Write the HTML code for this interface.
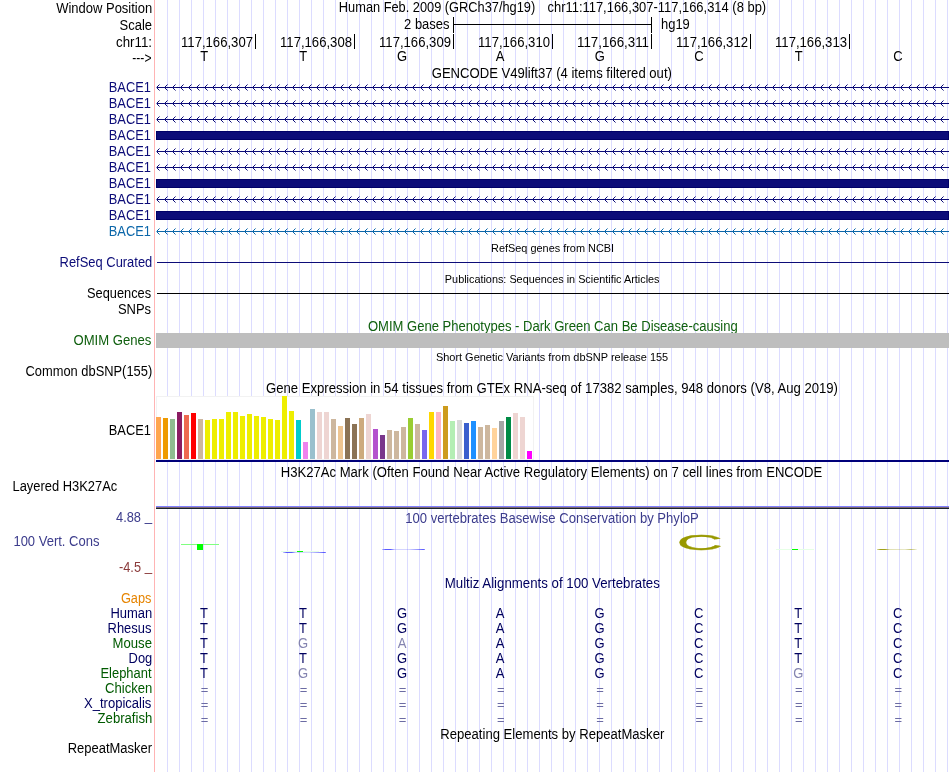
<!DOCTYPE html>
<html lang="en"><head><meta charset="utf-8"><title>UCSC Genome Browser - chr11:117,166,307-117,166,314</title>
<style>html,body{margin:0;padding:0;background:#fff}svg{display:block;will-change:transform}text{font-family:"Liberation Sans",sans-serif;font-size:14px}</style></head><body>
<svg width="950" height="772" viewBox="0 0 950 772">
<rect x="0" y="0" width="950" height="772" fill="#fff"/>
<g shape-rendering="crispEdges">
<path d="M167.5 0V772M179.5 0V772M191.5 0V772M203.5 0V772M215.5 0V772M227.5 0V772M239.5 0V772M251.5 0V772M263.5 0V772M275.5 0V772M287.5 0V772M299.5 0V772M311.5 0V772M323.5 0V772M335.5 0V772M347.5 0V772M359.5 0V772M371.5 0V772M383.5 0V772M395.5 0V772M407.5 0V772M419.5 0V772M431.5 0V772M443.5 0V772M455.5 0V772M467.5 0V772M479.5 0V772M491.5 0V772M503.5 0V772M515.5 0V772M527.5 0V772M539.5 0V772M551.5 0V772M563.5 0V772M575.5 0V772M587.5 0V772M599.5 0V772M611.5 0V772M623.5 0V772M635.5 0V772M647.5 0V772M659.5 0V772M671.5 0V772M683.5 0V772M695.5 0V772M707.5 0V772M719.5 0V772M731.5 0V772M743.5 0V772M755.5 0V772M767.5 0V772M779.5 0V772M791.5 0V772M803.5 0V772M815.5 0V772M827.5 0V772M839.5 0V772M851.5 0V772M863.5 0V772M875.5 0V772M887.5 0V772M899.5 0V772M911.5 0V772M923.5 0V772M935.5 0V772M947.5 0V772" stroke="#dcdcff" stroke-width="1" fill="none"/>
<path d="M154.5 0V772" stroke="#ffb4b4" stroke-width="1" fill="none"/>
</g>
<text x="152.2" y="12.6" text-anchor="end" textLength="96.0" lengthAdjust="spacingAndGlyphs">Window Position</text>
<text x="152" y="29.5" text-anchor="end" textLength="32.5" lengthAdjust="spacingAndGlyphs">Scale</text>
<text x="152" y="47" text-anchor="end" textLength="35.98" lengthAdjust="spacingAndGlyphs">chr11:</text>
<text x="132.33" y="63" textLength="19.13" lengthAdjust="spacingAndGlyphs">---&gt;</text>
<text x="338.86" y="12.3" textLength="196.33" lengthAdjust="spacingAndGlyphs">Human Feb. 2009 (GRCh37/hg19)</text>
<text x="547.51" y="12.3" textLength="218.64" lengthAdjust="spacingAndGlyphs">chr11:117,166,307-117,166,314 (8 bp)</text>
<text x="449.5" y="29.3" text-anchor="end" textLength="45.4" lengthAdjust="spacingAndGlyphs">2 bases</text>
<text x="661" y="29" textLength="28.8" lengthAdjust="spacingAndGlyphs">hg19</text>
<g shape-rendering="crispEdges" stroke="#000" fill="none">
<path d="M453.5 17V33M651.5 17V33M453 24.5H652"/>
<path d="M255.5 34V49M354.5 34V49M453.5 34V49M552.5 34V49M651.5 34V49M750.5 34V49M849.5 34V49"/>
</g>
<text x="253" y="47" text-anchor="end" textLength="71.98" lengthAdjust="spacingAndGlyphs">117,166,307</text>
<text x="352" y="47" text-anchor="end" textLength="71.98" lengthAdjust="spacingAndGlyphs">117,166,308</text>
<text x="451" y="47" text-anchor="end" textLength="71.98" lengthAdjust="spacingAndGlyphs">117,166,309</text>
<text x="550" y="47" text-anchor="end" textLength="71.98" lengthAdjust="spacingAndGlyphs">117,166,310</text>
<text x="649" y="47" text-anchor="end" textLength="71.97" lengthAdjust="spacingAndGlyphs">117,166,311</text>
<text x="748" y="47" text-anchor="end" textLength="71.98" lengthAdjust="spacingAndGlyphs">117,166,312</text>
<text x="847" y="47" text-anchor="end" textLength="71.98" lengthAdjust="spacingAndGlyphs">117,166,313</text>
<text x="204.2" y="60.7" text-anchor="middle" textLength="7.9" lengthAdjust="spacingAndGlyphs">T</text>
<text x="303.2" y="60.7" text-anchor="middle" textLength="7.9" lengthAdjust="spacingAndGlyphs">T</text>
<text x="402" y="60.7" text-anchor="middle" textLength="10.1" lengthAdjust="spacingAndGlyphs">G</text>
<text x="500.2" y="60.7" text-anchor="middle" textLength="8.7" lengthAdjust="spacingAndGlyphs">A</text>
<text x="599.8" y="60.7" text-anchor="middle" textLength="10.1" lengthAdjust="spacingAndGlyphs">G</text>
<text x="699" y="60.7" text-anchor="middle" textLength="9.4" lengthAdjust="spacingAndGlyphs">C</text>
<text x="798.6" y="60.7" text-anchor="middle" textLength="7.9" lengthAdjust="spacingAndGlyphs">T</text>
<text x="898.0" y="60.7" text-anchor="middle" textLength="9.4" lengthAdjust="spacingAndGlyphs">C</text>
<text x="431.69" y="77.8" textLength="240.21" lengthAdjust="spacingAndGlyphs">GENCODE V49lift37 (4 items filtered out)</text>
<defs>
<pattern id="cv" x="156" y="79" width="8" height="16" patternUnits="userSpaceOnUse"><g shape-rendering="crispEdges" fill="#0c0c78"><path d="M0 8h8v1h-8zM1 7h1v1h-1zM1 9h1v1h-1zM2 6h1v1h-1zM2 10h1v1h-1z"/><path d="M3 5h1v1h-1zM3 11h1v1h-1z" fill-opacity="0.55"/></g></pattern>
<pattern id="cl" x="156" y="79" width="8" height="16" patternUnits="userSpaceOnUse"><g shape-rendering="crispEdges" fill="#0b66a9"><path d="M0 8h8v1h-8zM1 7h1v1h-1zM1 9h1v1h-1zM2 6h1v1h-1zM2 10h1v1h-1z"/><path d="M3 5h1v1h-1zM3 11h1v1h-1z" fill-opacity="0.55"/></g></pattern>
</defs>
<text x="108.81" y="91.5" fill="#0c0c78" textLength="42.08" lengthAdjust="spacingAndGlyphs">BACE1</text>
<rect x="156" y="84" width="792" height="7" fill="url(#cv)" shape-rendering="crispEdges"/>
<rect x="156" y="87" width="1" height="1" fill="#fff" fill-opacity="0.5" shape-rendering="crispEdges"/>
<rect x="948" y="87" width="1" height="1" fill="#0c0c78" shape-rendering="crispEdges"/>
<text x="108.81" y="107.5" fill="#0c0c78" textLength="42.08" lengthAdjust="spacingAndGlyphs">BACE1</text>
<rect x="156" y="100" width="792" height="7" fill="url(#cv)" shape-rendering="crispEdges"/>
<rect x="156" y="103" width="1" height="1" fill="#fff" fill-opacity="0.5" shape-rendering="crispEdges"/>
<rect x="948" y="103" width="1" height="1" fill="#0c0c78" shape-rendering="crispEdges"/>
<text x="108.81" y="123.5" fill="#0c0c78" textLength="42.08" lengthAdjust="spacingAndGlyphs">BACE1</text>
<rect x="156" y="116" width="792" height="7" fill="url(#cv)" shape-rendering="crispEdges"/>
<rect x="156" y="119" width="1" height="1" fill="#fff" fill-opacity="0.5" shape-rendering="crispEdges"/>
<rect x="948" y="119" width="1" height="1" fill="#0c0c78" shape-rendering="crispEdges"/>
<text x="108.81" y="139.5" fill="#0c0c78" textLength="42.08" lengthAdjust="spacingAndGlyphs">BACE1</text>
<rect x="156" y="131" width="793" height="9" fill="#000066" shape-rendering="crispEdges"/>
<rect x="157" y="132" width="791" height="7" fill="#0c0c78" shape-rendering="crispEdges"/>
<text x="108.81" y="155.5" fill="#0c0c78" textLength="42.08" lengthAdjust="spacingAndGlyphs">BACE1</text>
<rect x="156" y="148" width="792" height="7" fill="url(#cv)" shape-rendering="crispEdges"/>
<rect x="156" y="151" width="1" height="1" fill="#fff" fill-opacity="0.5" shape-rendering="crispEdges"/>
<rect x="948" y="151" width="1" height="1" fill="#0c0c78" shape-rendering="crispEdges"/>
<text x="108.81" y="171.5" fill="#0c0c78" textLength="42.08" lengthAdjust="spacingAndGlyphs">BACE1</text>
<rect x="156" y="164" width="792" height="7" fill="url(#cv)" shape-rendering="crispEdges"/>
<rect x="156" y="167" width="1" height="1" fill="#fff" fill-opacity="0.5" shape-rendering="crispEdges"/>
<rect x="948" y="167" width="1" height="1" fill="#0c0c78" shape-rendering="crispEdges"/>
<text x="108.81" y="187.5" fill="#0c0c78" textLength="42.08" lengthAdjust="spacingAndGlyphs">BACE1</text>
<rect x="156" y="179" width="793" height="9" fill="#000066" shape-rendering="crispEdges"/>
<rect x="157" y="180" width="791" height="7" fill="#0c0c78" shape-rendering="crispEdges"/>
<text x="108.81" y="203.5" fill="#0c0c78" textLength="42.08" lengthAdjust="spacingAndGlyphs">BACE1</text>
<rect x="156" y="196" width="792" height="7" fill="url(#cv)" shape-rendering="crispEdges"/>
<rect x="156" y="199" width="1" height="1" fill="#fff" fill-opacity="0.5" shape-rendering="crispEdges"/>
<rect x="948" y="199" width="1" height="1" fill="#0c0c78" shape-rendering="crispEdges"/>
<text x="108.81" y="219.5" fill="#0c0c78" textLength="42.08" lengthAdjust="spacingAndGlyphs">BACE1</text>
<rect x="156" y="211" width="793" height="9" fill="#000066" shape-rendering="crispEdges"/>
<rect x="157" y="212" width="791" height="7" fill="#0c0c78" shape-rendering="crispEdges"/>
<text x="108.81" y="235.5" fill="#0b66a9" textLength="42.08" lengthAdjust="spacingAndGlyphs">BACE1</text>
<rect x="156" y="228" width="792" height="7" fill="url(#cl)" shape-rendering="crispEdges"/>
<rect x="156" y="231" width="1" height="1" fill="#fff" fill-opacity="0.5" shape-rendering="crispEdges"/>
<rect x="948" y="231" width="1" height="1" fill="#0b66a9" shape-rendering="crispEdges"/>
<text x="491.06" y="252.0" style="font-size:11px" textLength="123.07" lengthAdjust="spacingAndGlyphs">RefSeq genes from NCBI</text>
<text x="59.6" y="266.6" fill="#0c0c78" textLength="92.69" lengthAdjust="spacingAndGlyphs">RefSeq Curated</text>
<rect x="157" y="262" width="792" height="1" fill="#0c0c78" shape-rendering="crispEdges"/>
<text x="444.87" y="283.0" style="font-size:11px" textLength="214.66" lengthAdjust="spacingAndGlyphs">Publications: Sequences in Scientific Articles</text>
<text x="87.01" y="298" textLength="64.09" lengthAdjust="spacingAndGlyphs">Sequences</text>
<rect x="157" y="293" width="792" height="1" fill="#000" shape-rendering="crispEdges"/>
<text x="117.9" y="314" textLength="33.2" lengthAdjust="spacingAndGlyphs">SNPs</text>
<text x="367.9" y="330.6" fill="#10600f" textLength="369.81" lengthAdjust="spacingAndGlyphs">OMIM Gene Phenotypes - Dark Green Can Be Disease-causing</text>
<text x="73.49" y="345" fill="#10600f" textLength="77.91" lengthAdjust="spacingAndGlyphs">OMIM Genes</text>
<rect x="156" y="333" width="793" height="15" fill="#bebebe" shape-rendering="crispEdges"/>
<text x="435.88" y="361" style="font-size:11px" textLength="232.33" lengthAdjust="spacingAndGlyphs">Short Genetic Variants from dbSNP release 155</text>
<text x="25.5" y="376" textLength="126.69" lengthAdjust="spacingAndGlyphs">Common dbSNP(155)</text>
<text x="265.99" y="392.7" textLength="572.0" lengthAdjust="spacingAndGlyphs">Gene Expression in 54 tissues from GTEx RNA-seq of 17382 samples, 948 donors (V8, Aug 2019)</text>
<text x="108.81" y="434.8" textLength="42.08" lengthAdjust="spacingAndGlyphs">BACE1</text>
<rect x="156" y="396" width="378" height="64" fill="#fff" shape-rendering="crispEdges"/>
<path d="M156.5 460V396.5H533.5V460M156 459.5H534" stroke="#f2f2f2" fill="none" shape-rendering="crispEdges"/>
<g shape-rendering="crispEdges">
<rect x="156" y="417" width="5" height="42" fill="#ffa54f"/>
<rect x="163" y="418" width="5" height="41" fill="#ee9a00"/>
<rect x="170" y="419" width="5" height="40" fill="#8fbc8f"/>
<rect x="177" y="412" width="5" height="47" fill="#8b1c62"/>
<rect x="184" y="415" width="5" height="44" fill="#ee6a50"/>
<rect x="191" y="413" width="5" height="46" fill="#ff0000"/>
<rect x="198" y="419" width="5" height="40" fill="#cdb79e"/>
<rect x="205" y="420" width="5" height="39" fill="#eeee00"/>
<rect x="212" y="419" width="5" height="40" fill="#eeee00"/>
<rect x="219" y="419" width="5" height="40" fill="#eeee00"/>
<rect x="226" y="412" width="5" height="47" fill="#eeee00"/>
<rect x="233" y="412" width="5" height="47" fill="#eeee00"/>
<rect x="240" y="416" width="5" height="43" fill="#eeee00"/>
<rect x="247" y="414" width="5" height="45" fill="#eeee00"/>
<rect x="254" y="416" width="5" height="43" fill="#eeee00"/>
<rect x="261" y="417" width="5" height="42" fill="#eeee00"/>
<rect x="268" y="419" width="5" height="40" fill="#eeee00"/>
<rect x="275" y="420" width="5" height="39" fill="#eeee00"/>
<rect x="282" y="396" width="5" height="63" fill="#eeee00"/>
<rect x="289" y="411" width="5" height="48" fill="#eeee00"/>
<rect x="296" y="420" width="5" height="39" fill="#00cdcd"/>
<rect x="303" y="442" width="5" height="17" fill="#ee82ee"/>
<rect x="310" y="409" width="5" height="50" fill="#9ac0cd"/>
<rect x="317" y="412" width="5" height="47" fill="#eed5d2"/>
<rect x="324" y="412" width="5" height="47" fill="#eed5d2"/>
<rect x="331" y="419" width="5" height="40" fill="#cdb79e"/>
<rect x="338" y="426" width="5" height="33" fill="#eec591"/>
<rect x="345" y="418" width="5" height="41" fill="#8b7355"/>
<rect x="352" y="424" width="5" height="35" fill="#8b7355"/>
<rect x="359" y="418" width="5" height="41" fill="#cdaa7d"/>
<rect x="366" y="414" width="5" height="45" fill="#eed5d2"/>
<rect x="373" y="429" width="5" height="30" fill="#b452cd"/>
<rect x="380" y="435" width="5" height="24" fill="#7a378b"/>
<rect x="387" y="430" width="5" height="29" fill="#cdb79e"/>
<rect x="394" y="431" width="5" height="28" fill="#cdb79e"/>
<rect x="401" y="427" width="5" height="32" fill="#cdb79e"/>
<rect x="408" y="418" width="5" height="41" fill="#9acd32"/>
<rect x="415" y="424" width="5" height="35" fill="#cdb79e"/>
<rect x="422" y="430" width="5" height="29" fill="#7a67ee"/>
<rect x="429" y="412" width="5" height="47" fill="#ffd700"/>
<rect x="436" y="412" width="5" height="47" fill="#ffb6c1"/>
<rect x="443" y="406" width="5" height="53" fill="#cd9b1d"/>
<rect x="450" y="421" width="5" height="38" fill="#b4eeb4"/>
<rect x="457" y="420" width="5" height="39" fill="#d9d9d9"/>
<rect x="464" y="423" width="5" height="36" fill="#3a5fcd"/>
<rect x="471" y="421" width="5" height="38" fill="#1e90ff"/>
<rect x="478" y="427" width="5" height="32" fill="#cdb79e"/>
<rect x="485" y="425" width="5" height="34" fill="#cdb79e"/>
<rect x="492" y="428" width="5" height="31" fill="#ffd39b"/>
<rect x="499" y="421" width="5" height="38" fill="#a6a6a6"/>
<rect x="506" y="417" width="5" height="42" fill="#008b45"/>
<rect x="513" y="413" width="5" height="46" fill="#eed5d2"/>
<rect x="520" y="417" width="5" height="42" fill="#eed5d2"/>
<rect x="527" y="451" width="5" height="8" fill="#ff00ff"/>
<rect x="156" y="460" width="793" height="2" fill="#00007a"/>
</g>
<text x="280.69" y="476.5" textLength="541.5" lengthAdjust="spacingAndGlyphs">H3K27Ac Mark (Often Found Near Active Regulatory Elements) on 7 cell lines from ENCODE</text>
<text x="12.5" y="491.1" textLength="104.79" lengthAdjust="spacingAndGlyphs">Layered H3K27Ac</text>
<g shape-rendering="crispEdges">
<rect x="156" y="506" width="793" height="1" fill="#8080ff"/>
<rect x="156" y="507" width="793" height="1" fill="#806874"/>
<rect x="156" y="508" width="793" height="1" fill="#18242e"/>
</g>
<text x="116.0" y="521.6" fill="#3c3c8c" textLength="24.99" lengthAdjust="spacingAndGlyphs">4.88</text>
<text x="144.81" y="521.2" fill="#3c3c8c" textLength="7.39" lengthAdjust="spacingAndGlyphs">_</text>
<text x="405.19" y="522.5" fill="#3c3c8c" textLength="293.61" lengthAdjust="spacingAndGlyphs">100 vertebrates Basewise Conservation by PhyloP</text>
<text x="13.41" y="546.3" fill="#3c3c8c" textLength="85.98" lengthAdjust="spacingAndGlyphs">100 Vert. Cons</text>
<text x="119.01" y="571.6" fill="#8c3c3c" textLength="21.99" lengthAdjust="spacingAndGlyphs">-4.5</text>
<text x="144.81" y="571.2" fill="#8c3c3c" textLength="7.39" lengthAdjust="spacingAndGlyphs">_</text>
<g shape-rendering="crispEdges">
<rect x="181" y="544" width="38" height="1" fill="#80ff80"/>
<rect x="197" y="544" width="6" height="6" fill="#00ff00"/>
<rect x="281" y="551" width="38" height="1" fill="#e6ffe6"/>
<rect x="297" y="551" width="6" height="1" fill="#00ff00"/>
</g>
<linearGradient id="sq1" gradientUnits="userSpaceOnUse" x1="283" y1="0" x2="326" y2="0"><stop offset="0" stop-color="rgb(50,50,255)" stop-opacity="0.25"/><stop offset="0.08" stop-color="rgb(50,50,255)" stop-opacity="0.8"/><stop offset="0.2" stop-color="rgb(50,50,255)" stop-opacity="0.8"/><stop offset="0.3" stop-color="rgb(50,50,255)" stop-opacity="0.22"/><stop offset="0.62" stop-color="rgb(50,50,255)" stop-opacity="0.2"/><stop offset="0.85" stop-color="rgb(50,50,255)" stop-opacity="0.55"/><stop offset="0.96" stop-color="rgb(50,50,255)" stop-opacity="0.8"/><stop offset="1" stop-color="rgb(50,50,255)" stop-opacity="0.5"/></linearGradient>
<rect x="283" y="552" width="43" height="1" fill="url(#sq1)" shape-rendering="crispEdges"/>
<linearGradient id="sq2" gradientUnits="userSpaceOnUse" x1="382" y1="0" x2="425" y2="0"><stop offset="0" stop-color="rgb(50,50,255)" stop-opacity="0.25"/><stop offset="0.08" stop-color="rgb(50,50,255)" stop-opacity="0.8"/><stop offset="0.2" stop-color="rgb(50,50,255)" stop-opacity="0.8"/><stop offset="0.3" stop-color="rgb(50,50,255)" stop-opacity="0.22"/><stop offset="0.62" stop-color="rgb(50,50,255)" stop-opacity="0.2"/><stop offset="0.85" stop-color="rgb(50,50,255)" stop-opacity="0.55"/><stop offset="0.96" stop-color="rgb(50,50,255)" stop-opacity="0.8"/><stop offset="1" stop-color="rgb(50,50,255)" stop-opacity="0.5"/></linearGradient>
<rect x="382" y="549" width="43" height="1" fill="url(#sq2)" shape-rendering="crispEdges"/>
<text transform="translate(676.4,549.9) scale(2.95,1)" x="0" y="0" fill="#999900" stroke="#999900" stroke-width="0.6" vector-effect="non-scaling-stroke" style="font-size:21.8px">C</text>
<g shape-rendering="crispEdges">
<rect x="776" y="549" width="38" height="1" fill="#e6ffe6"/>
<rect x="792" y="549" width="6" height="1" fill="#00ff00"/>
</g>
<linearGradient id="sq3" gradientUnits="userSpaceOnUse" x1="877" y1="0" x2="917" y2="0"><stop offset="0" stop-color="rgb(150,150,0)" stop-opacity="0.3"/><stop offset="0.08" stop-color="rgb(150,150,0)" stop-opacity="0.9"/><stop offset="0.2" stop-color="rgb(150,150,0)" stop-opacity="0.9"/><stop offset="0.32" stop-color="rgb(150,150,0)" stop-opacity="0.3"/><stop offset="0.7" stop-color="rgb(150,150,0)" stop-opacity="0.22"/><stop offset="0.84" stop-color="rgb(150,150,0)" stop-opacity="0.55"/><stop offset="0.93" stop-color="rgb(150,150,0)" stop-opacity="0.35"/><stop offset="1" stop-color="rgb(150,150,0)" stop-opacity="0.08"/></linearGradient>
<rect x="877" y="549" width="40" height="1" fill="url(#sq3)" shape-rendering="crispEdges"/>
<text x="444.78" y="588.4" fill="#00005f" textLength="215.1" lengthAdjust="spacingAndGlyphs">Multiz Alignments of 100 Vertebrates</text>
<text x="120.91" y="602.7" fill="#e68400" textLength="30.48" lengthAdjust="spacingAndGlyphs">Gaps</text>
<text x="110.4" y="617.5" fill="#00005f" textLength="41.9" lengthAdjust="spacingAndGlyphs">Human</text>
<text x="204.0" y="617.5" text-anchor="middle" fill="#00005f" textLength="7.9" lengthAdjust="spacingAndGlyphs">T</text>
<text x="303.0" y="617.5" text-anchor="middle" fill="#00005f" textLength="7.9" lengthAdjust="spacingAndGlyphs">T</text>
<text x="402.0" y="617.5" text-anchor="middle" fill="#00005f" textLength="10.1" lengthAdjust="spacingAndGlyphs">G</text>
<text x="500.2" y="617.5" text-anchor="middle" fill="#00005f" textLength="8.7" lengthAdjust="spacingAndGlyphs">A</text>
<text x="599.6" y="617.5" text-anchor="middle" fill="#00005f" textLength="10.1" lengthAdjust="spacingAndGlyphs">G</text>
<text x="698.8" y="617.5" text-anchor="middle" fill="#00005f" textLength="9.4" lengthAdjust="spacingAndGlyphs">C</text>
<text x="798.3" y="617.5" text-anchor="middle" fill="#00005f" textLength="7.9" lengthAdjust="spacingAndGlyphs">T</text>
<text x="897.8" y="617.5" text-anchor="middle" fill="#00005f" textLength="9.4" lengthAdjust="spacingAndGlyphs">C</text>
<text x="107.6" y="632.5" fill="#00005f" textLength="43.79" lengthAdjust="spacingAndGlyphs">Rhesus</text>
<text x="204.0" y="632.5" text-anchor="middle" fill="#00005f" textLength="7.9" lengthAdjust="spacingAndGlyphs">T</text>
<text x="303.0" y="632.5" text-anchor="middle" fill="#00005f" textLength="7.9" lengthAdjust="spacingAndGlyphs">T</text>
<text x="402.0" y="632.5" text-anchor="middle" fill="#00005f" textLength="10.1" lengthAdjust="spacingAndGlyphs">G</text>
<text x="500.2" y="632.5" text-anchor="middle" fill="#00005f" textLength="8.7" lengthAdjust="spacingAndGlyphs">A</text>
<text x="599.6" y="632.5" text-anchor="middle" fill="#00005f" textLength="10.1" lengthAdjust="spacingAndGlyphs">G</text>
<text x="698.8" y="632.5" text-anchor="middle" fill="#00005f" textLength="9.4" lengthAdjust="spacingAndGlyphs">C</text>
<text x="798.3" y="632.5" text-anchor="middle" fill="#00005f" textLength="7.9" lengthAdjust="spacingAndGlyphs">T</text>
<text x="897.8" y="632.5" text-anchor="middle" fill="#00005f" textLength="9.4" lengthAdjust="spacingAndGlyphs">C</text>
<text x="112.59" y="647.5" fill="#005a00" textLength="39.42" lengthAdjust="spacingAndGlyphs">Mouse</text>
<text x="204.0" y="647.5" text-anchor="middle" fill="#00005f" textLength="7.9" lengthAdjust="spacingAndGlyphs">T</text>
<text x="303.0" y="647.5" text-anchor="middle" fill="#8484b0" textLength="10.1" lengthAdjust="spacingAndGlyphs">G</text>
<text x="402.0" y="647.5" text-anchor="middle" fill="#8484b0" textLength="8.7" lengthAdjust="spacingAndGlyphs">A</text>
<text x="500.2" y="647.5" text-anchor="middle" fill="#00005f" textLength="8.7" lengthAdjust="spacingAndGlyphs">A</text>
<text x="599.6" y="647.5" text-anchor="middle" fill="#00005f" textLength="10.1" lengthAdjust="spacingAndGlyphs">G</text>
<text x="698.8" y="647.5" text-anchor="middle" fill="#00005f" textLength="9.4" lengthAdjust="spacingAndGlyphs">C</text>
<text x="798.3" y="647.5" text-anchor="middle" fill="#00005f" textLength="7.9" lengthAdjust="spacingAndGlyphs">T</text>
<text x="897.8" y="647.5" text-anchor="middle" fill="#00005f" textLength="9.4" lengthAdjust="spacingAndGlyphs">C</text>
<text x="128.6" y="662.5" fill="#00005f" textLength="23.69" lengthAdjust="spacingAndGlyphs">Dog</text>
<text x="204.0" y="662.5" text-anchor="middle" fill="#00005f" textLength="7.9" lengthAdjust="spacingAndGlyphs">T</text>
<text x="303.0" y="662.5" text-anchor="middle" fill="#00005f" textLength="7.9" lengthAdjust="spacingAndGlyphs">T</text>
<text x="402.0" y="662.5" text-anchor="middle" fill="#00005f" textLength="10.1" lengthAdjust="spacingAndGlyphs">G</text>
<text x="500.2" y="662.5" text-anchor="middle" fill="#00005f" textLength="8.7" lengthAdjust="spacingAndGlyphs">A</text>
<text x="599.6" y="662.5" text-anchor="middle" fill="#00005f" textLength="10.1" lengthAdjust="spacingAndGlyphs">G</text>
<text x="698.8" y="662.5" text-anchor="middle" fill="#00005f" textLength="9.4" lengthAdjust="spacingAndGlyphs">C</text>
<text x="798.3" y="662.5" text-anchor="middle" fill="#00005f" textLength="7.9" lengthAdjust="spacingAndGlyphs">T</text>
<text x="897.8" y="662.5" text-anchor="middle" fill="#00005f" textLength="9.4" lengthAdjust="spacingAndGlyphs">C</text>
<text x="100.5" y="677.5" fill="#005a00" textLength="51.0" lengthAdjust="spacingAndGlyphs">Elephant</text>
<text x="204.0" y="677.5" text-anchor="middle" fill="#00005f" textLength="7.9" lengthAdjust="spacingAndGlyphs">T</text>
<text x="303.0" y="677.5" text-anchor="middle" fill="#8484b0" textLength="10.1" lengthAdjust="spacingAndGlyphs">G</text>
<text x="402.0" y="677.5" text-anchor="middle" fill="#00005f" textLength="10.1" lengthAdjust="spacingAndGlyphs">G</text>
<text x="500.2" y="677.5" text-anchor="middle" fill="#00005f" textLength="8.7" lengthAdjust="spacingAndGlyphs">A</text>
<text x="599.6" y="677.5" text-anchor="middle" fill="#00005f" textLength="10.1" lengthAdjust="spacingAndGlyphs">G</text>
<text x="698.8" y="677.5" text-anchor="middle" fill="#00005f" textLength="9.4" lengthAdjust="spacingAndGlyphs">C</text>
<text x="798.3" y="677.5" text-anchor="middle" fill="#8484b0" textLength="10.1" lengthAdjust="spacingAndGlyphs">G</text>
<text x="897.8" y="677.5" text-anchor="middle" fill="#00005f" textLength="9.4" lengthAdjust="spacingAndGlyphs">C</text>
<text x="104.99" y="692.5" fill="#005a00" textLength="47.31" lengthAdjust="spacingAndGlyphs">Chicken</text>
<text x="204.5" y="694" text-anchor="middle" fill="#6c6ca4" style="font-size:12.99px">=</text>
<text x="303.5" y="694" text-anchor="middle" fill="#6c6ca4" style="font-size:12.99px">=</text>
<text x="402.5" y="694" text-anchor="middle" fill="#6c6ca4" style="font-size:12.99px">=</text>
<text x="500.7" y="694" text-anchor="middle" fill="#6c6ca4" style="font-size:12.99px">=</text>
<text x="600.1" y="694" text-anchor="middle" fill="#6c6ca4" style="font-size:12.99px">=</text>
<text x="699.3" y="694" text-anchor="middle" fill="#6c6ca4" style="font-size:12.99px">=</text>
<text x="798.8" y="694" text-anchor="middle" fill="#6c6ca4" style="font-size:12.99px">=</text>
<text x="898.3" y="694" text-anchor="middle" fill="#6c6ca4" style="font-size:12.99px">=</text>
<text x="84.0" y="707.5" fill="#00005f" textLength="67.4" lengthAdjust="spacingAndGlyphs">X_tropicalis</text>
<text x="204.5" y="709" text-anchor="middle" fill="#6c6ca4" style="font-size:12.99px">=</text>
<text x="303.5" y="709" text-anchor="middle" fill="#6c6ca4" style="font-size:12.99px">=</text>
<text x="402.5" y="709" text-anchor="middle" fill="#6c6ca4" style="font-size:12.99px">=</text>
<text x="500.7" y="709" text-anchor="middle" fill="#6c6ca4" style="font-size:12.99px">=</text>
<text x="600.1" y="709" text-anchor="middle" fill="#6c6ca4" style="font-size:12.99px">=</text>
<text x="699.3" y="709" text-anchor="middle" fill="#6c6ca4" style="font-size:12.99px">=</text>
<text x="798.8" y="709" text-anchor="middle" fill="#6c6ca4" style="font-size:12.99px">=</text>
<text x="898.3" y="709" text-anchor="middle" fill="#6c6ca4" style="font-size:12.99px">=</text>
<text x="97.59" y="722.5" fill="#005a00" textLength="54.72" lengthAdjust="spacingAndGlyphs">Zebrafish</text>
<text x="204.5" y="724" text-anchor="middle" fill="#6c6ca4" style="font-size:12.99px">=</text>
<text x="303.5" y="724" text-anchor="middle" fill="#6c6ca4" style="font-size:12.99px">=</text>
<text x="402.5" y="724" text-anchor="middle" fill="#6c6ca4" style="font-size:12.99px">=</text>
<text x="500.7" y="724" text-anchor="middle" fill="#6c6ca4" style="font-size:12.99px">=</text>
<text x="600.1" y="724" text-anchor="middle" fill="#6c6ca4" style="font-size:12.99px">=</text>
<text x="699.3" y="724" text-anchor="middle" fill="#6c6ca4" style="font-size:12.99px">=</text>
<text x="798.8" y="724" text-anchor="middle" fill="#6c6ca4" style="font-size:12.99px">=</text>
<text x="898.3" y="724" text-anchor="middle" fill="#6c6ca4" style="font-size:12.99px">=</text>
<text x="440.29" y="738.5" textLength="224.01" lengthAdjust="spacingAndGlyphs">Repeating Elements by RepeatMasker</text>
<text x="67.7" y="753" textLength="84.4" lengthAdjust="spacingAndGlyphs">RepeatMasker</text>
</svg></body></html>
